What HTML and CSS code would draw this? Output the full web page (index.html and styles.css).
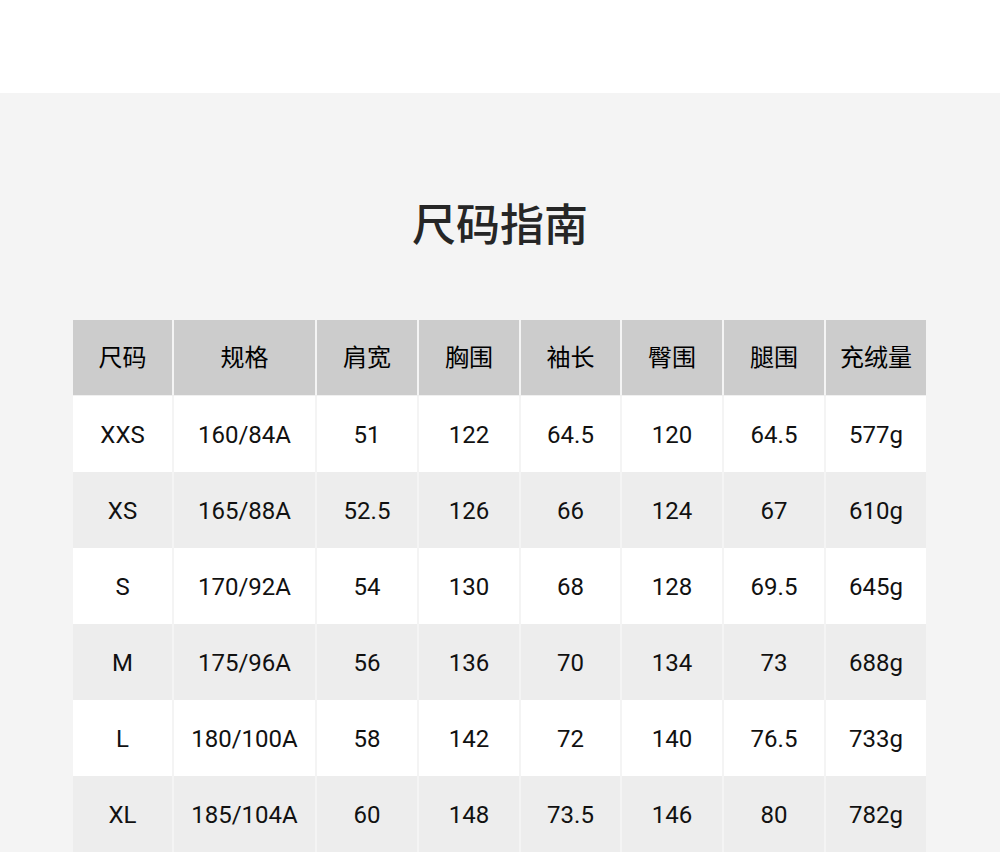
FILE: index.html
```html
<!DOCTYPE html>
<html lang="zh-CN">
<head>
<meta charset="utf-8">
<title>尺码指南</title>
<link rel="stylesheet" href="styles.css">
</head>
<body>
<div class="top"></div>
<section class="guide">
  <h1 class="title">尺码指南</h1>
  <div class="table">
    <div class="row head">
      <div class="cell">尺码</div><div class="cell">规格</div><div class="cell">肩宽</div><div class="cell">胸围</div><div class="cell">袖长</div><div class="cell">臀围</div><div class="cell">腿围</div><div class="cell">充绒量</div>
    </div>
    <div class="row">
      <div class="cell">XXS</div><div class="cell">160/84A</div><div class="cell">51</div><div class="cell">122</div><div class="cell">64.5</div><div class="cell">120</div><div class="cell">64.5</div><div class="cell">577g</div>
    </div>
    <div class="row alt">
      <div class="cell">XS</div><div class="cell">165/88A</div><div class="cell">52.5</div><div class="cell">126</div><div class="cell">66</div><div class="cell">124</div><div class="cell">67</div><div class="cell">610g</div>
    </div>
    <div class="row">
      <div class="cell">S</div><div class="cell">170/92A</div><div class="cell">54</div><div class="cell">130</div><div class="cell">68</div><div class="cell">128</div><div class="cell">69.5</div><div class="cell">645g</div>
    </div>
    <div class="row alt">
      <div class="cell">M</div><div class="cell">175/96A</div><div class="cell">56</div><div class="cell">136</div><div class="cell">70</div><div class="cell">134</div><div class="cell">73</div><div class="cell">688g</div>
    </div>
    <div class="row">
      <div class="cell">L</div><div class="cell">180/100A</div><div class="cell">58</div><div class="cell">142</div><div class="cell">72</div><div class="cell">140</div><div class="cell">76.5</div><div class="cell">733g</div>
    </div>
    <div class="row alt">
      <div class="cell">XL</div><div class="cell">185/104A</div><div class="cell">60</div><div class="cell">148</div><div class="cell">73.5</div><div class="cell">146</div><div class="cell">80</div><div class="cell">782g</div>
    </div>
  </div>
</section>
</body>
</html>
```

FILE: styles.css
```css
html, body {
  margin: 0;
  padding: 0;
}
body {
  font-family: "Noto Sans CJK SC", "Noto Sans", sans-serif;
  background: #f4f4f4;
  color: #1a1a1a;
  height: 852px;
  overflow: hidden;
}
.top {
  height: 93px;
  background: #ffffff;
}
.guide {
  padding-top: 99px;
}
.title {
  margin: 0 0 68px 0;
  height: 60px;
  line-height: 60px;
  text-align: center;
  font-size: 44px;
  font-weight: 500;
  color: #262626;
}
.table {
  width: 853px;
  margin-left: 73px;
  display: flex;
  flex-direction: column;
}
.row {
  display: grid;
  grid-template-columns: 99px 141px 100px 100px 99px 100px 100px 100px;
  column-gap: 2px;
  height: 76px;
}
.cell {
  display: flex;
  align-items: center;
  justify-content: center;
  padding-top: 1px;
  box-sizing: border-box;
  background: #ffffff;
  font-family: Roboto, "Noto Sans CJK SC", sans-serif;
  font-size: 24px;
  font-weight: 400;
  color: #111111;
}
.head .cell {
  background: #cccccc;
  color: #000000;
  font-family: "Noto Sans CJK SC", sans-serif;
  font-weight: 400;
  padding-top: 0;
  padding-bottom: 4px;
}
.head {
  border-bottom: 1px solid #f0f0f0;
  height: 75px;
}
.alt .cell {
  background: #ededed;
}
```
